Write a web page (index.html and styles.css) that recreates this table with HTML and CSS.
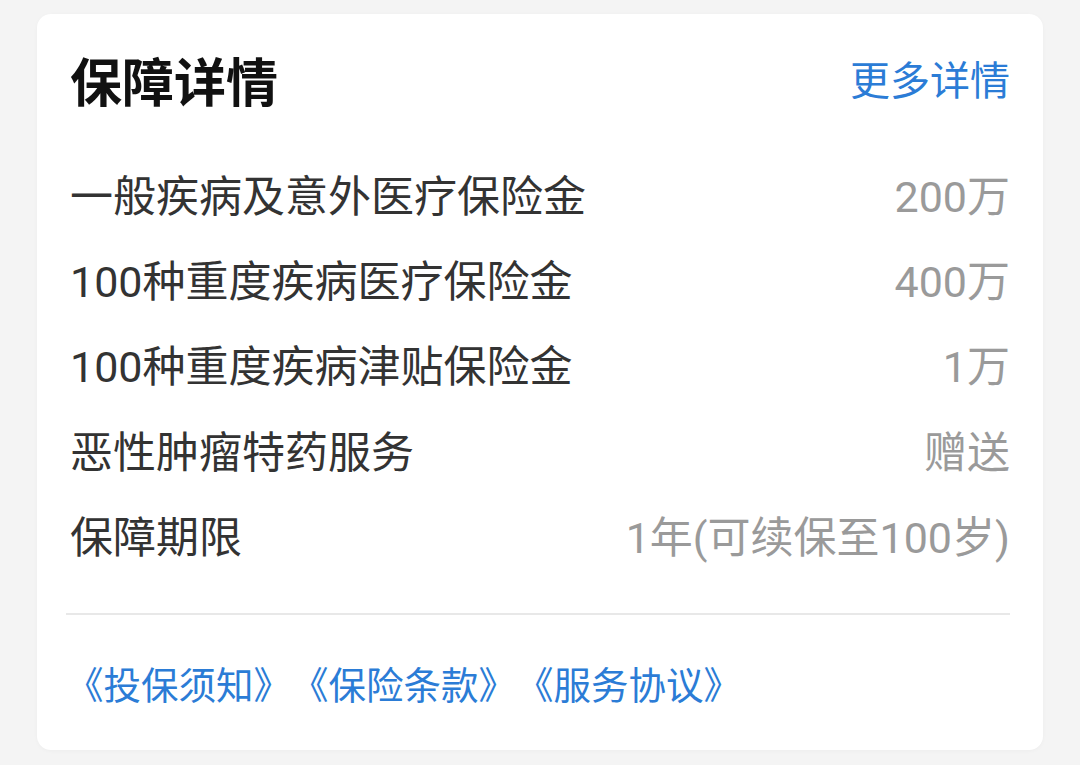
FILE: index.html
```html
<!DOCTYPE html>
<html>
<head>
    <title>保障详情</title>
    <meta charset="UTF-8">
    <link rel="stylesheet" href="styles.css">
</head>
<body>
    <div class="card">
        <div class="card-header">
            <h2>保障详情</h2>
            <a class="more" href="#">更多详情</a>
        </div>
        <ul class="cover-list">
            <li><span>一般疾病及意外医疗保险金</span><span class="value">200万</span></li>
            <li><span>100种重度疾病医疗保险金</span><span class="value">400万</span></li>
            <li><span>100种重度疾病津贴保险金</span><span class="value">1万</span></li>
            <li><span>恶性肿瘤特药服务</span><span class="value">赠送</span></li>
            <li><span>保障期限</span><span class="value">1年(可续保至100岁)</span></li>
        </ul>
        <div class="links">
            <a href="#">《投保须知》</a><a href="#">《保险条款》</a><a href="#">《服务协议》</a>
        </div>
    </div>
</body>
</html>
```

FILE: styles.css
```css
body {
    margin: 0;
    padding: 14px 37px 13px 37px;
    background-color: #f4f4f4;
    font-family: Roboto, "Noto Sans CJK SC", sans-serif;
}
.card {
    background: #fff;
    border-radius: 14px;
    padding: 46px 33px 44px 29px;
    box-shadow: 0 1px 4px rgba(0,0,0,0.03);
}
.card-header {
    display: flex;
    align-items: center;
    justify-content: space-between;
    padding-left: 4px;
    height: 50px;
}
.card-header h2 {
    margin: 0;
    font-size: 52px;
    line-height: 50px;
    font-weight: 700;
    color: #111;
}
.more {
    font-size: 40px;
    line-height: 50px;
    color: #2b7cd6;
    text-decoration: none;
    margin-top: -6px;
}
.cover-list {
    list-style: none;
    margin: 40px 0 0 0;
    padding: 0 0 0 4px;
}
.cover-list li {
    display: flex;
    align-items: center;
    justify-content: space-between;
    height: 85.3px;
    font-size: 43px;
    color: #333;
}
.cover-list .value {
    color: #9a9a9a;
}
.links {
    border-top: 2px solid #e8e8e8;
    margin-top: 37px;
    padding-top: 51px;
    display: flex;
    font-size: 37.5px;
    line-height: 40px;
}
.links a {
    color: #2b7cd6;
    text-decoration: none;
}
```
